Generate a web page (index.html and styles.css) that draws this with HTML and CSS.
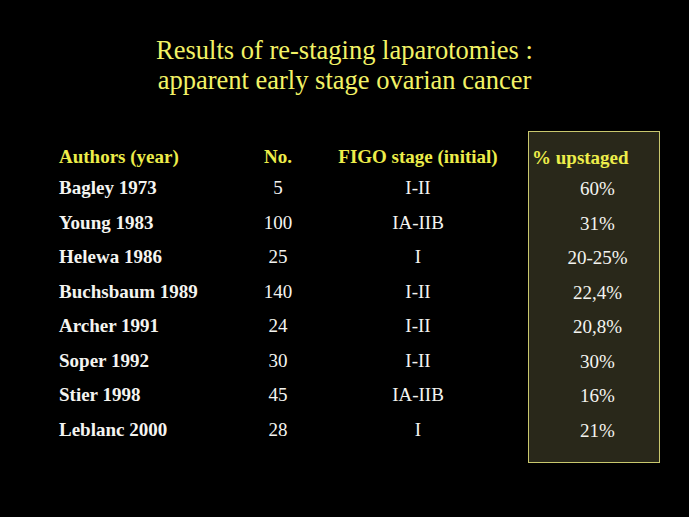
FILE: index.html
```html
<!DOCTYPE html>
<html>
<head>
<meta charset="utf-8">
<link rel="stylesheet" href="styles.css">
</head>
<body>
<div class="slide">
  <h1 class="title">Results of re-staging laparotomies :<br>apparent early stage ovarian cancer</h1>
  <div class="table">
    <div class="col c-author">
      <div class="cell head">Authors (year)</div>
      <div class="cell">Bagley 1973</div>
      <div class="cell">Young 1983</div>
      <div class="cell">Helewa 1986</div>
      <div class="cell">Buchsbaum 1989</div>
      <div class="cell">Archer 1991</div>
      <div class="cell">Soper 1992</div>
      <div class="cell">Stier 1998</div>
      <div class="cell">Leblanc 2000</div>
    </div>
    <div class="col c-no">
      <div class="cell head">No.</div>
      <div class="cell">5</div>
      <div class="cell">100</div>
      <div class="cell">25</div>
      <div class="cell">140</div>
      <div class="cell">24</div>
      <div class="cell">30</div>
      <div class="cell">45</div>
      <div class="cell">28</div>
    </div>
    <div class="col c-figo">
      <div class="cell head">FIGO stage (initial)</div>
      <div class="cell">I-II</div>
      <div class="cell">IA-IIB</div>
      <div class="cell">I</div>
      <div class="cell">I-II</div>
      <div class="cell">I-II</div>
      <div class="cell">I-II</div>
      <div class="cell">IA-IIB</div>
      <div class="cell">I</div>
    </div>
    <div class="col c-pct">
      <div class="cell head">% upstaged</div>
      <div class="cell">60%</div>
      <div class="cell">31%</div>
      <div class="cell">20-25%</div>
      <div class="cell">22,4%</div>
      <div class="cell">20,8%</div>
      <div class="cell">30%</div>
      <div class="cell">16%</div>
      <div class="cell">21%</div>
    </div>
  </div>
</div>
</body>
</html>
```
FILE: styles.css
```css
html, body {
  margin: 0;
  padding: 0;
  background: #000;
}
.slide {
  width: 689px;
  height: 517px;
  background: #000;
  font-family: "Liberation Serif", "Times New Roman", serif;
  overflow: hidden;
}
.title {
  margin: 0;
  padding-top: 35px;
  text-align: center;
  font-weight: normal;
  font-size: 26.5px;
  line-height: 30px;
  color: #f2f266;
}
.table {
  display: flex;
  margin-top: 47px;
}
.col {
  display: flex;
  flex-direction: column;
}
.cell {
  height: 34.55px;
  line-height: 34.55px;
  font-size: 19px;
  color: #f4f4f0;
  white-space: nowrap;
}
.cell.head {
  height: 29px;
  line-height: 29px;
  font-weight: bold;
  color: #eded4a;
}
.c-author {
  margin-left: 59px;
  width: 160px;
}
.c-author .cell {
  font-weight: bold;
}
.c-no {
  width: 118px;
  text-align: center;
}
.c-figo {
  width: 162px;
  text-align: center;
}
.c-pct {
  margin-left: 29px;
  width: 132px;
  height: 332px;
  margin-top: -11px;
  padding-top: 11px;
  box-sizing: border-box;
  border: 1px solid #c9c86e;
  background: #29281a;
}
.c-pct .cell {
  text-align: center;
  padding-left: 7px;
}
.c-pct .cell.head {
  text-align: left;
  padding-left: 3px;
}
```
